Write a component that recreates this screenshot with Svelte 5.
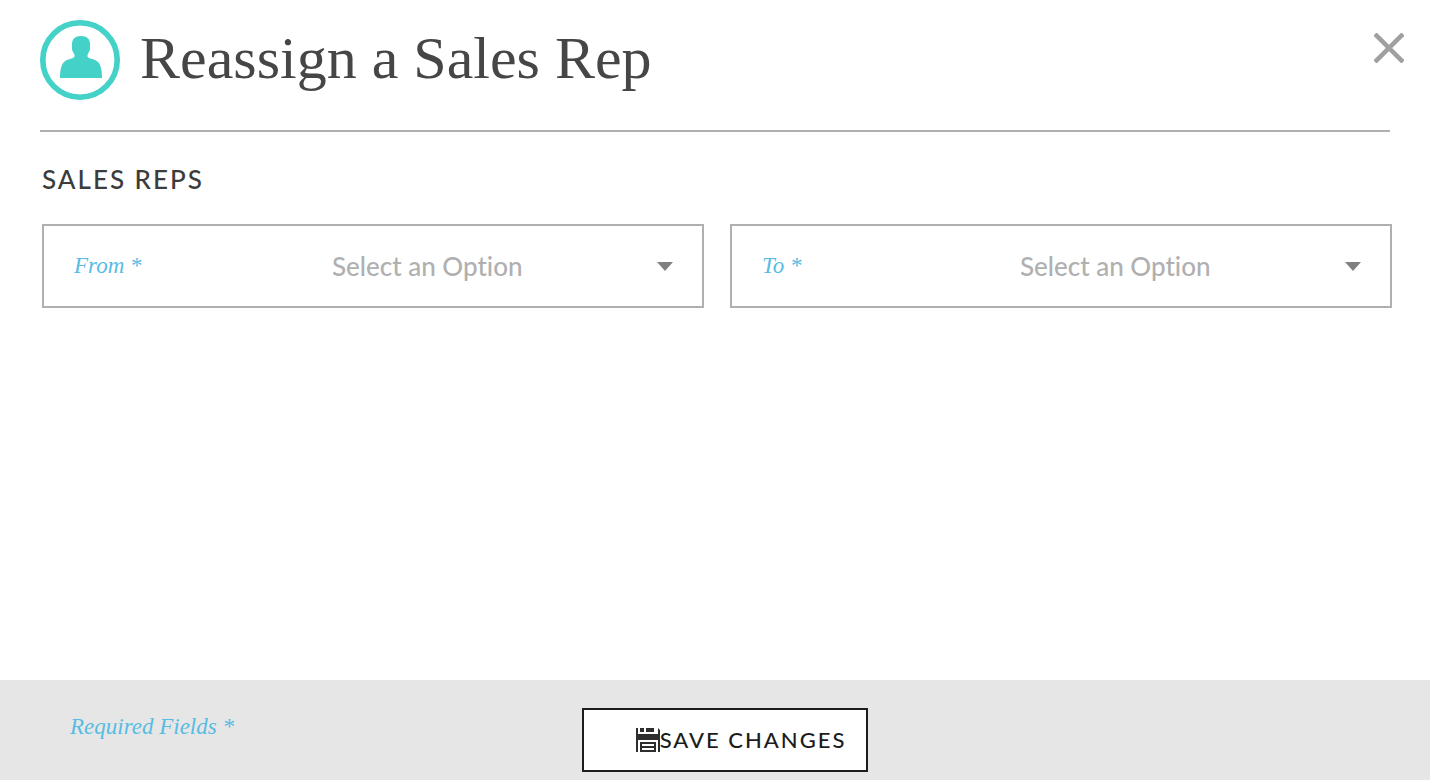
<script lang="ts">
  const reps = ['Select an Option', 'Unassigned'];
  const fields = [
    { id: 'rep-from', label: 'From *' },
    { id: 'rep-to', label: 'To *' }
  ];
  let choice = $state({ 'rep-from': reps[0], 'rep-to': reps[0] });
</script>

<form class="dialog" onsubmit={(e) => e.preventDefault()}>
  <header>
    <svg class="avatar" viewBox="0 0 80 80" aria-hidden="true">
      <circle cx="40" cy="40" r="37.2" fill="none" stroke="#43d1c8" stroke-width="5.600" />
      <path
        fill="#43d1c8"
        d="M41 16c6 0 9 3 9 8v5c0 2.500-2.300 4.200-2.600 6.500-.2 1.800 1.600 2.700 3.600 3.300 2.500.7 5.500 1.600 7.500 3.700C61 45.500 62 51 62 58H20c0-7 1-12.500 3.500-15.500 2-2.100 5-3 7.500-3.700 2-.6 3.800-1.500 3.600-3.300-.3-2.300-2.600-4-2.600-6.500v-5c0-5 3-8 9-8z"
      />
    </svg>
    <h1>Reassign a Sales Rep</h1>
    <button class="close" type="button" aria-label="Close">
      <svg viewBox="0 0 30 30" aria-hidden="true">
        <path d="M1 1l28 28M29 1L1 29" fill="none" stroke="#a0a0a0" stroke-width="4.500" />
      </svg>
    </button>
  </header>

  <main>
    <h2>SALES REPS</h2>
    <div class="fields">
      {#each fields as field}
        <div class="field">
          <label for={field.id}>{field.label}</label>
          <select id={field.id} bind:value={choice[field.id]}>
            {#each reps as rep}
              <option>{rep}</option>
            {/each}
          </select>
          <svg class="caret" viewBox="0 0 16 9" aria-hidden="true">
            <path d="M0 0h16L8 9z" fill="#808080" />
          </svg>
        </div>
      {/each}
    </div>
  </main>

  <footer>
    <p>Required Fields *</p>
    <button class="save" type="submit">
      <svg viewBox="0 0 24 24" aria-hidden="true">
        <path
          fill="#2e2e2e"
          d="M0 0h2v6h20V0l2 2v22h-2V12H2v12H0zM4 0h4v4H4zM10 0h8v4h-8zM0 6h24v6H0z"
        />
        <path d="M5 15h14v8H5zM5 19h14" fill="none" stroke="#2e2e2e" stroke-width="2" />
      </svg>
      <span>SAVE CHANGES</span>
    </button>
  </footer>
</form>

<style>
  :global(body) {
    margin: 0;
    background: #fff;
  }

  .dialog {
    display: flex;
    flex-direction: column;
    min-height: 100vh;
    font-family: Lato, sans-serif;
    color: #444;
  }

  header {
    display: flex;
    align-items: center;
    gap: 20px;
    margin: 0 40px;
    padding: 20px 0 30px;
    border-bottom: 2px solid #b0b0b0;
  }

  .avatar {
    flex: none;
    width: 80px;
    height: 80px;
  }

  h1 {
    flex: 1;
    margin: 0;
    padding-bottom: 4px;
    font: 400 60px/76px 'Liberation Serif', serif;
    color: #464646;
  }

  .close {
    align-self: flex-start;
    width: 32px;
    height: 32px;
    margin: 12px -15px 0 0;
    padding: 1px;
    border: 0;
    background: none;
    cursor: pointer;
  }

  .close svg {
    display: block;
    width: 30px;
    height: 30px;
  }

  main {
    flex: 1;
    padding: 30px 38px 40px 42px;
  }

  h2 {
    margin: 0 0 28px;
    font-size: 26px;
    font-weight: 500;
    line-height: 34px;
    letter-spacing: 2px;
    color: #3c3c3c;
  }

  .fields {
    display: grid;
    grid-template-columns: 1fr 1fr;
    gap: 26px;
  }

  .field {
    display: grid;
    grid-template-columns: 258px 1fr 16px;
    align-items: center;
    padding: 0 29px 0 30px;
    border: 2px solid #b0b0b0;
  }

  label,
  footer p {
    font: italic 400 23px/34px 'Liberation Serif', serif;
    color: #57bce4;
  }

  select {
    grid-column: 2 / 4;
    grid-row: 1;
    height: 80px;
    padding: 0;
    border: 0;
    appearance: none;
    background: none;
    font: 500 26px Lato, sans-serif;
    font-variant-ligatures: none;
    color: #b0b0b0;
    cursor: pointer;
  }

  .caret {
    grid-column: 3;
    grid-row: 1;
    width: 16px;
    height: 9px;
    pointer-events: none;
  }

  footer {
    display: grid;
    grid-template-columns: 1fr auto 1fr;
    align-items: start;
    padding: 28px 50px 8px 70px;
    background: #e6e6e6;
  }

  footer p {
    margin: 2px 0 0;
  }

  .save {
    display: flex;
    align-items: center;
    height: 64px;
    padding: 0 20px 0 52px;
    border: 2px solid #1c1c1c;
    background: #fff;
    font: 500 22px Lato, sans-serif;
    letter-spacing: 2px;
    color: #1c1c1c;
    cursor: pointer;
  }

  .save svg {
    width: 24px;
    height: 24px;
  }

  .save span {
    padding-bottom: 2px;
  }
</style>
